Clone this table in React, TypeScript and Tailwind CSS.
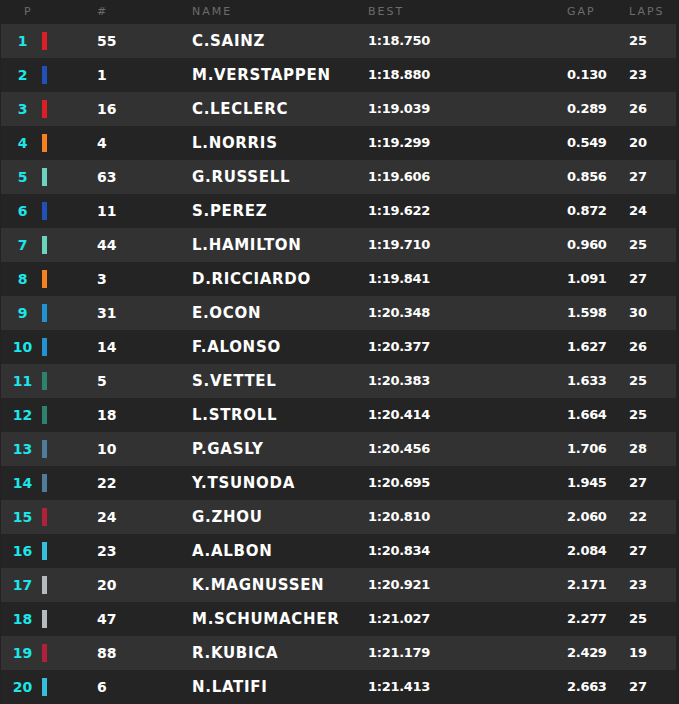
import React from 'react';

interface Driver {
  pos: number;
  num: string;
  name: string;
  best: string;
  gap: string;
  laps: string;
  color: string;
}

const drivers: Driver[] = [
  { pos: 1, num: '55', name: 'C.SAINZ', best: '1:18.750', gap: '', laps: '25', color: 'bg-[#dc1f26]' },
  { pos: 2, num: '1', name: 'M.VERSTAPPEN', best: '1:18.880', gap: '0.130', laps: '23', color: 'bg-[#2250b9]' },
  { pos: 3, num: '16', name: 'C.LECLERC', best: '1:19.039', gap: '0.289', laps: '26', color: 'bg-[#dc1f26]' },
  { pos: 4, num: '4', name: 'L.NORRIS', best: '1:19.299', gap: '0.549', laps: '20', color: 'bg-[#f5821f]' },
  { pos: 5, num: '63', name: 'G.RUSSELL', best: '1:19.606', gap: '0.856', laps: '27', color: 'bg-[#6cd3bf]' },
  { pos: 6, num: '11', name: 'S.PEREZ', best: '1:19.622', gap: '0.872', laps: '24', color: 'bg-[#2250b9]' },
  { pos: 7, num: '44', name: 'L.HAMILTON', best: '1:19.710', gap: '0.960', laps: '25', color: 'bg-[#6cd3bf]' },
  { pos: 8, num: '3', name: 'D.RICCIARDO', best: '1:19.841', gap: '1.091', laps: '27', color: 'bg-[#f5821f]' },
  { pos: 9, num: '31', name: 'E.OCON', best: '1:20.348', gap: '1.598', laps: '30', color: 'bg-[#2293d1]' },
  { pos: 10, num: '14', name: 'F.ALONSO', best: '1:20.377', gap: '1.627', laps: '26', color: 'bg-[#2293d1]' },
  { pos: 11, num: '5', name: 'S.VETTEL', best: '1:20.383', gap: '1.633', laps: '25', color: 'bg-[#2d826d]' },
  { pos: 12, num: '18', name: 'L.STROLL', best: '1:20.414', gap: '1.664', laps: '25', color: 'bg-[#2d826d]' },
  { pos: 13, num: '10', name: 'P.GASLY', best: '1:20.456', gap: '1.706', laps: '28', color: 'bg-[#4e7c9b]' },
  { pos: 14, num: '22', name: 'Y.TSUNODA', best: '1:20.695', gap: '1.945', laps: '27', color: 'bg-[#4e7c9b]' },
  { pos: 15, num: '24', name: 'G.ZHOU', best: '1:20.810', gap: '2.060', laps: '22', color: 'bg-[#b12039]' },
  { pos: 16, num: '23', name: 'A.ALBON', best: '1:20.834', gap: '2.084', laps: '27', color: 'bg-[#37bedd]' },
  { pos: 17, num: '20', name: 'K.MAGNUSSEN', best: '1:20.921', gap: '2.171', laps: '23', color: 'bg-[#b6babd]' },
  { pos: 18, num: '47', name: 'M.SCHUMACHER', best: '1:21.027', gap: '2.277', laps: '25', color: 'bg-[#b6babd]' },
  { pos: 19, num: '88', name: 'R.KUBICA', best: '1:21.179', gap: '2.429', laps: '19', color: 'bg-[#b12039]' },
  { pos: 20, num: '6', name: 'N.LATIFI', best: '1:21.413', gap: '2.663', laps: '27', color: 'bg-[#37bedd]' },
];

export default function App() {
  return (
    <div
      className="w-[679px] h-[704px] bg-[#222222] overflow-hidden"
      style={{ fontFamily: '"DejaVu Sans", "Liberation Sans", sans-serif' }}
    >
      {/* header */}
      <div className="flex items-center h-[24px] text-[11px] tracking-[2px] text-[#6c6c6c]">
        <div className="w-[97px] pl-[24px]">P</div>
        <div className="w-[95px]">#</div>
        <div className="w-[176px]">NAME</div>
        <div className="w-[199px]">BEST</div>
        <div className="w-[62px]">GAP</div>
        <div>LAPS</div>
      </div>

      <div className="ml-px w-[675px]">
        {drivers.map((d, i) => (
          <div
            key={d.pos}
            className={`flex items-center h-[34px] font-bold text-white ${
              i % 2 === 0 ? 'bg-[#323232]' : 'bg-[#242424]'
            }`}
          >
            <div className="w-[41px] text-center pl-[2px] text-[14px] text-[#1de6ea]">{d.pos}</div>
            <div className={`w-[5px] h-[18px] ${d.color}`}></div>
            <div className="w-[50px]"></div>
            <div className="w-[95px] text-[14px]">{d.num}</div>
            <div className="w-[176px] text-[15px] tracking-[0.7px]">{d.name}</div>
            <div className="w-[140px] text-[13px] tracking-[-0.3px]">{d.best}</div>
            <div className="w-[97px] pl-[59px] text-[13px] tracking-[-0.3px]">{d.gap}</div>
            <div className="pl-[24px] text-[13px]">{d.laps}</div>
          </div>
        ))}
      </div>
    </div>
  );
}
